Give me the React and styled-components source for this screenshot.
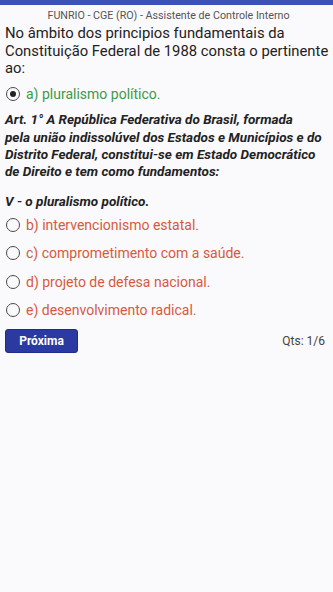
import React from "react";
import styled, { createGlobalStyle } from "styled-components";

const Global = createGlobalStyle`
  html, body { margin: 0; padding: 0; background: #faf9fc; }
  body { font-family: Roboto, "Noto Sans", sans-serif; }
`;

const Page = styled.div`
  width: 333px;
  min-height: 592px;
  background: #faf9fc;
  display: flex;
  flex-direction: column;
`;

const TopBar = styled.div`
  height: 5px;
  background: #3f51b5;
`;

const Content = styled.div`
  padding: 3.5px 1px 0 5px;
  display: flex;
  flex-direction: column;
`;

const Source = styled.div`
  font-size: 10.7px;
  color: #555;
  text-align: center;
  line-height: 13px;
`;

const Question = styled.div`
  font-size: 14.8px;
  line-height: 17.5px;
  color: #222;
  margin-top: 3.5px;
`;

const Options = styled.div`
  display: flex;
  flex-direction: column;
  margin-top: ${(p) => p.$mt || 0}px;
`;

const Option = styled.div`
  display: flex;
  align-items: center;
  gap: 6px;
  height: ${(p) => (p.$correct ? 28 : 28.4)}px;
  padding-left: 1px;
  color: ${(p) => (p.$correct ? "#3e9a48" : "#d65a3f")};
  font-size: 14px;
`;

const Radio = styled.span`
  width: 14px;
  height: 14px;
  box-sizing: border-box;
  border: 1.8px solid #4a4a4a;
  border-radius: 50%;
  display: flex;
  align-items: center;
  justify-content: center;
  flex-shrink: 0;
  &::after {
    content: "";
    display: ${(p) => (p.$checked ? "block" : "none")};
    width: 6px;
    height: 6px;
    border-radius: 50%;
    background: #222;
  }
`;

const Explanation = styled.div`
  font-weight: bold;
  font-style: italic;
  font-size: 13.5px;
  line-height: 17.3px;
  color: #222;
  margin-top: ${(p) => p.$mt}px;
`;

const Line = styled.span`
  display: block;
  white-space: nowrap;
`;

const Footer = styled.div`
  display: flex;
  align-items: center;
  justify-content: space-between;
  margin-top: 4.5px;
  padding-right: 7px;
`;

const Button = styled.button`
  width: 73px;
  height: 24px;
  background: #2b3aa0;
  color: #fff;
  border: 1px solid #1f2c8a;
  border-radius: 3px;
  font-family: Roboto, sans-serif;
  font-weight: bold;
  font-size: 12px;
  padding: 0;
`;

const Count = styled.span`
  font-size: 12px;
  color: #444;
`;

const articleLines = [
  "Art. 1° A República Federativa do Brasil, formada",
  "pela união indissolúvel dos Estados e Municípios e do",
  "Distrito Federal, constitui-se em Estado Democrático",
  "de Direito e tem como fundamentos:",
];

export default function App() {
  return (
    <Page>
      <Global />
      <TopBar />
      <Content>
        <Source>FUNRIO - CGE (RO) - Assistente de Controle Interno</Source>
        <Question>
          No âmbito dos principios fundamentais da Constituição Federal de 1988 consta o pertinente ao:
        </Question>
        <Options $mt={2}>
          <Option $correct>
            <Radio $checked />
            a) pluralismo político.
          </Option>
        </Options>
        <Explanation $mt={3.8}>
          {articleLines.map((l) => (
            <Line key={l}>{l}</Line>
          ))}
        </Explanation>
        <Explanation $mt={13}>V - o pluralismo político.</Explanation>
        <Options $mt={0}>
          <Option><Radio />b) intervencionismo estatal.</Option>
          <Option><Radio />c) comprometimento com a saúde.</Option>
          <Option><Radio />d) projeto de defesa nacional.</Option>
          <Option><Radio />e) desenvolvimento radical.</Option>
        </Options>
        <Footer>
          <Button>Próxima</Button>
          <Count>Qts: 1/6</Count>
        </Footer>
      </Content>
    </Page>
  );
}
